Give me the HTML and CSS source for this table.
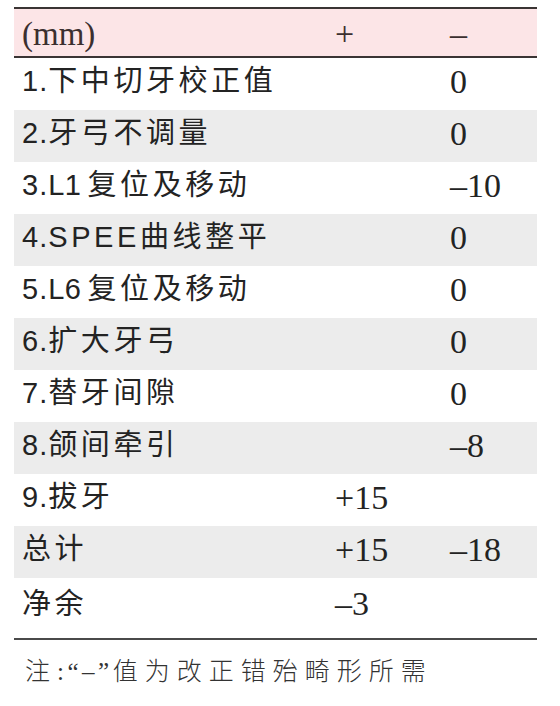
FILE: index.html
```html
<!DOCTYPE html>
<html lang="zh">
<head>
<meta charset="utf-8">
<link rel="stylesheet" href="styles.css">
</head>
<body>
<div class="sheet">
  <div class="table">
    <div class="row head">
      <div class="label unit">(mm)</div>
      <div class="num">+</div>
      <div class="num">–</div>
    </div>
    <div class="row"><div class="label"><span class="lat">1.</span>下中切牙校正值</div><div class="num"></div><div class="num">0</div></div>
    <div class="row alt"><div class="label"><span class="lat">2.</span>牙弓不调量</div><div class="num"></div><div class="num">0</div></div>
    <div class="row"><div class="label"><span class="lat">3.</span><span class="code">L1</span>复位及移动</div><div class="num"></div><div class="num">–10</div></div>
    <div class="row alt"><div class="label"><span class="lat">4.</span>SPEE曲线整平</div><div class="num"></div><div class="num">0</div></div>
    <div class="row"><div class="label"><span class="lat">5.</span><span class="code">L6</span>复位及移动</div><div class="num"></div><div class="num">0</div></div>
    <div class="row alt"><div class="label"><span class="lat">6.</span>扩大牙弓</div><div class="num"></div><div class="num">0</div></div>
    <div class="row"><div class="label"><span class="lat">7.</span>替牙间隙</div><div class="num"></div><div class="num">0</div></div>
    <div class="row alt"><div class="label"><span class="lat">8.</span>颌间牵引</div><div class="num"></div><div class="num">–8</div></div>
    <div class="row"><div class="label"><span class="lat">9.</span>拔牙</div><div class="num">+15</div><div class="num"></div></div>
    <div class="row alt"><div class="label">总计</div><div class="num">+15</div><div class="num">–18</div></div>
    <div class="row last"><div class="label">净余</div><div class="num">–3</div><div class="num"></div></div>
  </div>
  <p class="note">注<span class="punct">:“–”</span>值为改正错殆畸形所需</p>
</div>
</body>
</html>
```
FILE: styles.css
```css
html, body {
  margin: 0;
  padding: 0;
  background: #ffffff;
}
.sheet {
  padding: 7px 0 0 14px;
  width: 523px;
}
.table {
  border-top: 2px solid #3a3434;
  border-bottom: 2px solid #4a4a4a;
}
.row {
  display: grid;
  grid-template-columns: 313px 115px 1fr;
  align-items: center;
  height: 52px;
  padding-left: 8px;
  box-sizing: border-box;
}
.row.head {
  background: #fce5e7;
  border-bottom: 2px solid #3a3434;
  height: 49px;
}
.row.alt {
  background: #ececec;
}
.row.last {
  height: 60px;
  align-items: start;
  padding-top: 8px;
}
.label {
  font-family: "Liberation Sans", "Noto Sans CJK SC", sans-serif;
  font-size: 29px;
  letter-spacing: 3.6px;
  color: #232323;
  line-height: 36px;
  white-space: nowrap;
  margin-top: -6px;
}
.label .lat {
  letter-spacing: 1px;
}
.label .code {
  letter-spacing: 0.5px;
  padding-right: 6px;
}
.last .label, .last .num {
  margin-top: 0;
}
.num {
  font-family: "Liberation Serif", serif;
  font-size: 34px;
  color: #232323;
  line-height: 36px;
  margin-top: -4px;
}
.head .num, .head .label {
  margin-top: 2px;
}
.unit {
  font-family: "Liberation Serif", serif;
  font-size: 33px;
  letter-spacing: 0;
  color: #3b2f2f;
}
.head .num {
  color: #3b2f2f;
}
.note {
  margin: 17px 0 0 11px;
  font-family: "Liberation Serif", "Noto Sans CJK SC", serif;
  font-size: 25px;
  font-weight: 300;
  letter-spacing: 7px;
  color: #333333;
  line-height: 30px;
}
.note .punct {
  letter-spacing: 3.5px;
}
```
